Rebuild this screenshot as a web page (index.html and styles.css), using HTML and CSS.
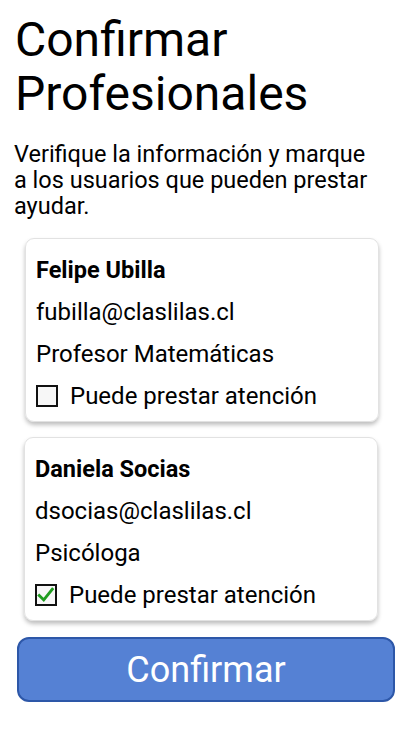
FILE: index.html
```html
<!DOCTYPE html>
<html lang="es">
<head>
<meta charset="utf-8">
<title>Confirmar Profesionales</title>
<link rel="stylesheet" href="styles.css">
</head>
<body>
<main class="page">
  <h1 class="title">Confirmar Profesionales</h1>
  <p class="intro">Verifique la información y marque a los usuarios que pueden prestar ayudar.</p>

  <section class="card">
    <div class="row name">Felipe Ubilla</div>
    <div class="row">fubilla@claslilas.cl</div>
    <div class="row">Profesor Matemáticas</div>
    <label class="row check">
      <span class="box"></span>
      <span>Puede prestar atención</span>
    </label>
  </section>

  <section class="card card-second">
    <div class="row name">Daniela Socias</div>
    <div class="row">dsocias@claslilas.cl</div>
    <div class="row">Psicóloga</div>
    <label class="row check">
      <span class="box checked">
        <svg viewBox="0 0 20 20" width="20" height="20"><path d="M2.5 10.5 L7.5 15.5 L17 3.5" fill="none" stroke="#1f9c1f" stroke-width="3.2" stroke-linecap="square"/></svg>
      </span>
      <span>Puede prestar atención</span>
    </label>
  </section>

  <button class="confirm">Confirmar</button>
</main>
</body>
</html>
```
FILE: styles.css
```css
* { box-sizing: border-box; }
html, body {
  margin: 0;
  padding: 0;
  background: #ffffff;
}
body {
  font-family: Roboto, "Noto Sans", sans-serif;
  color: #000;
}
.page {
  padding: 13px 16px 0 14px;
  display: flex;
  flex-direction: column;
}
.title {
  margin: 0 0 0 1px;
  font-size: 48px;
  font-weight: 400;
  line-height: 54px;
}
.intro {
  margin: 20px 22px 0 0;
  font-size: 23.5px;
  line-height: 26px;
}
.card {
  margin: 19px 16px 0 11px;
  border: 1px solid #e2e2e2;
  border-radius: 9px;
  box-shadow: 0 3px 4px rgba(0,0,0,0.25);
  padding: 10px 10px 4px 10px;
  display: flex;
  flex-direction: column;
}
.card-second {
  margin-top: 15px;
  margin-left: 10px;
  margin-right: 17px;
}
.row {
  height: 42px;
  display: flex;
  align-items: center;
  font-size: 24px;
}
.name { font-weight: 700; font-size: 23.5px; }
.check { gap: 12px; }
.box {
  width: 22px;
  height: 22px;
  border: 2px solid #111;
  background: #f7f7f7;
  display: flex;
  align-items: center;
  justify-content: center;
}
.confirm {
  margin: 16px 0 0 3px;
  height: 65px;
  background: #5581d4;
  border: 2px solid #2d57a8;
  border-radius: 12px;
  color: #fff;
  font-family: Roboto, "Noto Sans", sans-serif;
  font-size: 36px;
  padding: 0;
}
```
